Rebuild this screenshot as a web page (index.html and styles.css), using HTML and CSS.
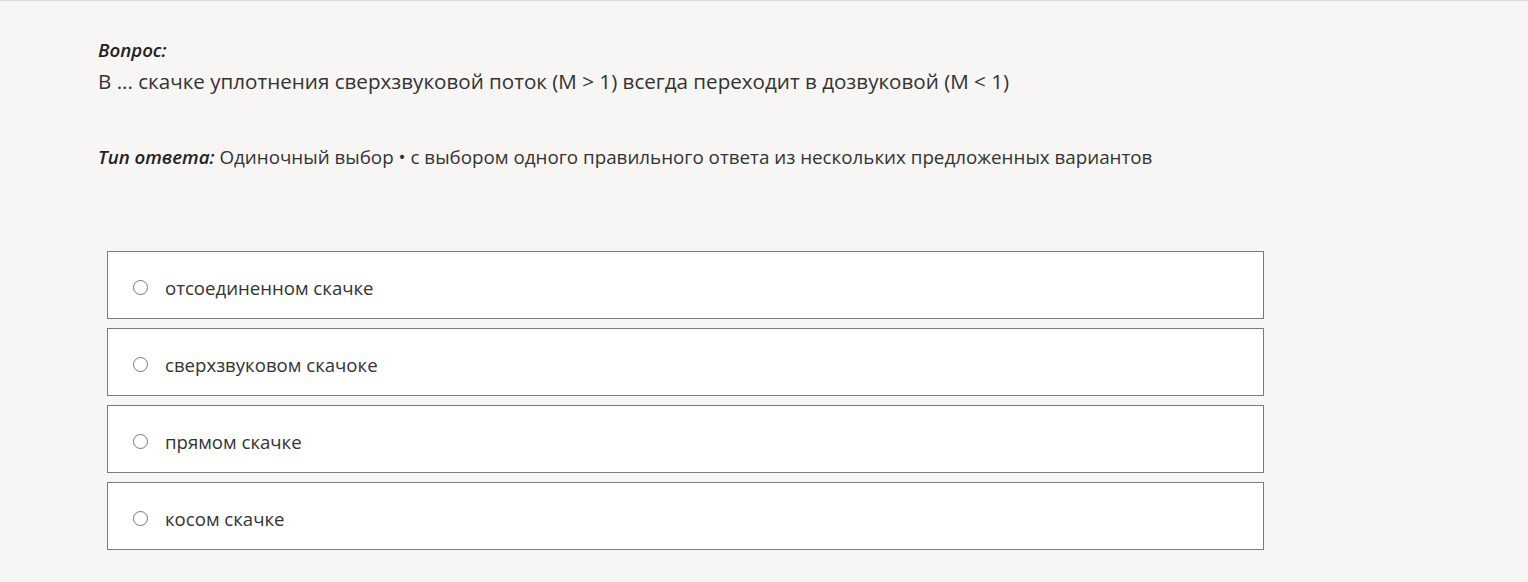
FILE: index.html
```html
<!DOCTYPE html>
<html lang="ru">
  <head>
    <meta charset="UTF-8" />
    <title>Вопрос</title>
    <link rel="stylesheet" href="styles.css">
  </head>
  <body>
    <div class="page">
      <div class="question">
        <p class="label">Вопрос:</p>
        <p class="text">В ... скачке уплотнения сверхзвуковой поток (M &gt; 1) всегда переходит в дозвуковой (M &lt; 1)</p>
      </div>
      <p class="type"><span class="label">Тип ответа:</span> Одиночный выбор • с выбором одного правильного ответа из нескольких предложенных вариантов</p>
      <div class="options">
        <label class="option"><span class="radio"></span>отсоединенном скачке</label>
        <label class="option"><span class="radio"></span>сверхзвуковом скачоке</label>
        <label class="option"><span class="radio"></span>прямом скачке</label>
        <label class="option"><span class="radio"></span>косом скачке</label>
      </div>
    </div>
  </body>
</html>
```

FILE: styles.css
```css
html {
  box-sizing: border-box;
}

*,
*:before,
*:after {
  box-sizing: inherit;
}

body,
p {
  margin: 0;
  padding: 0;
}

body {
  background: #f7f6f4;
  border-top: 1px solid #dcdcdc;
  font-family: "Open Sans", "Noto Sans", sans-serif;
  color: #333;
  height: 582px;
}

.page {
  padding: 36px 0 0 98px;
}

.label {
  font-weight: 600;
  font-style: italic;
  font-size: 18.7px;
  color: #222;
}

.question .label {
  line-height: 26px;
}

.question .text {
  font-size: 20.6px;
  line-height: 30px;
  margin-top: 3px;
}

.type {
  margin-top: 47px;
  font-size: 18.8px;
  line-height: 28px;
}

.options {
  display: flex;
  flex-direction: column;
  gap: 9px;
  margin: 80px 0 0 9px;
  width: 1157px;
}

.option {
  display: flex;
  align-items: center;
  height: 68px;
  background: #fff;
  border: 1px solid #7a7a7a;
  padding: 5px 0 0 25px;
  font-size: 18.6px;
  color: #333;
}

.radio {
  width: 15px;
  height: 15px;
  border: 1.5px solid #777;
  border-radius: 50%;
  margin-right: 17px;
  background: #fff;
}
```
